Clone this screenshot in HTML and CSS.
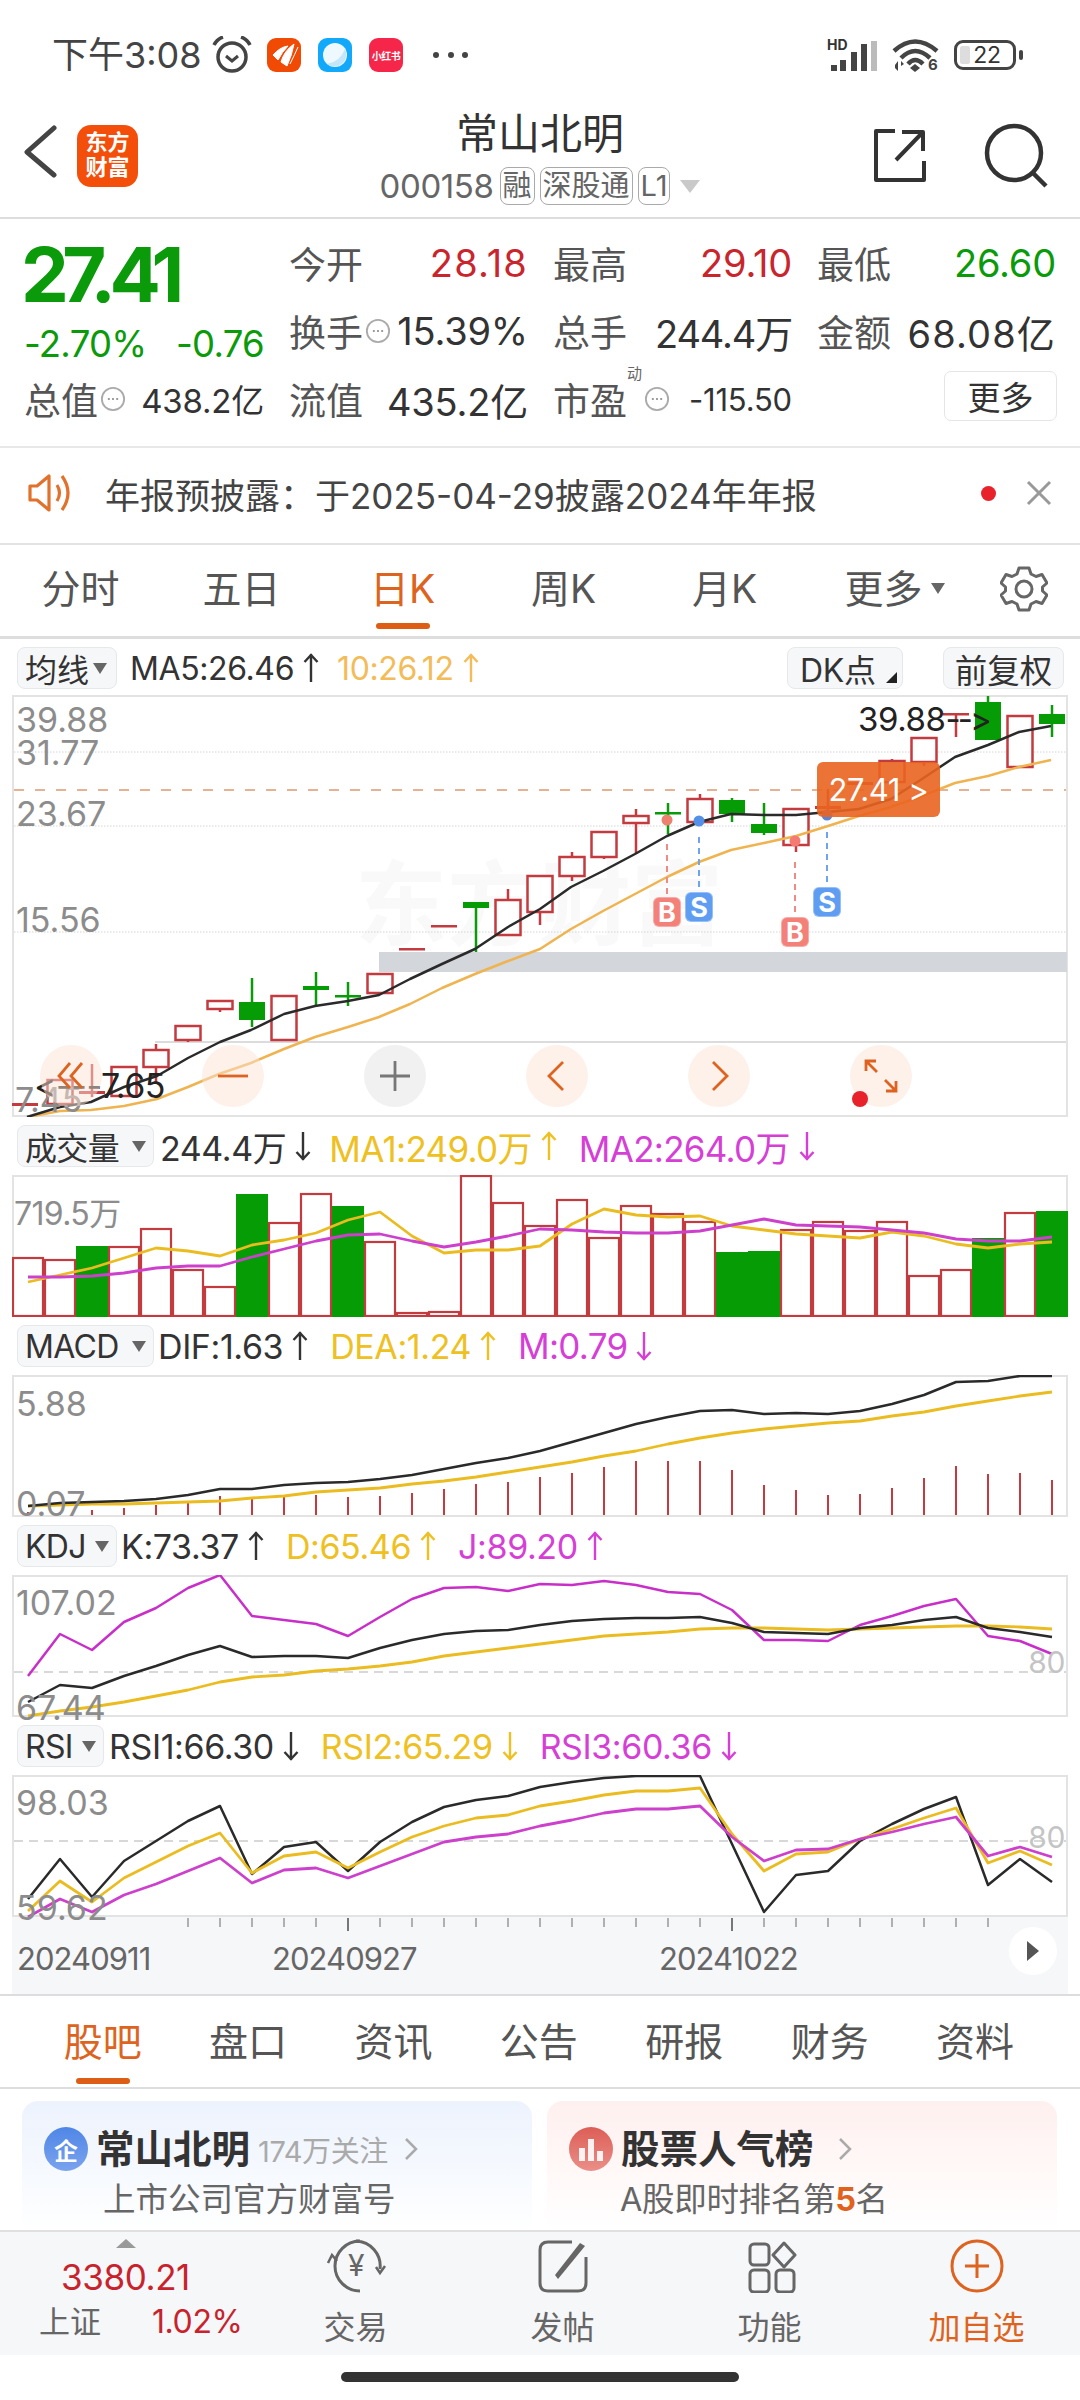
FILE: index.html
```html
<!DOCTYPE html>
<html lang="zh">
<head>
<meta charset="utf-8">
<title>常山北明</title>
<link rel="stylesheet" href="styles.css">
</head>
<body>
<svg class="defs" aria-hidden="true">
  <symbol id="up" viewBox="0 0 16 30"><path d="M8 1V29M1.500 9L8 2L14.500 9" fill="none" stroke="currentColor" stroke-width="2.400"/></symbol>
  <symbol id="down" viewBox="0 0 16 30"><path d="M8 1V29M1.500 21L8 28L14.500 21" fill="none" stroke="currentColor" stroke-width="2.400"/></symbol>
  <symbol id="hint" viewBox="0 0 28 28"><circle cx="14" cy="14" r="12" fill="none" stroke="#aaa" stroke-width="2"/><path d="M8.500 14h2M13 14h2M17.500 14h2" stroke="#999" stroke-width="2"/></symbol>
</svg>
<div class="page">

<div class="status">
  <span class="clock">下午3:08</span>
  <svg class="alarm" width="40" height="38" viewBox="0 0 40 38"><circle cx="20" cy="21" r="14" fill="none" stroke="#444" stroke-width="3.500"/><path d="M14 20l6 5 6-5" fill="none" stroke="#444" stroke-width="3"/><path d="M2 9Q5 3 11 1M38 9Q35 3 29 1" fill="none" stroke="#444" stroke-width="3.500"/></svg>
  <svg class="app app1" width="34" height="34" viewBox="0 0 34 34"><rect width="34" height="34" rx="9" fill="#f04a04"/><path d="M6 17Q13 9 21 8Q15 14 11 22ZM14 24Q17 13 27 6Q25 17 20 28ZM23 26Q28 16 31 9" fill="#fff" stroke="#fff" stroke-width="1"/></svg>
  <svg class="app app2" width="34" height="34" viewBox="0 0 34 34"><rect width="34" height="34" rx="9" fill="#12a9fb"/><circle cx="17" cy="17" r="12" fill="#eef8ff"/><path d="M27 11A12 12 0 0 1 9 26Q22 24 27 11Z" fill="#c4e6fb"/></svg>
  <span class="app3">小红书</span>
  <svg class="more" width="36" height="8" viewBox="0 0 36 8"><circle cx="4" cy="4" r="3" fill="#444"/><circle cx="19" cy="4" r="3" fill="#444"/><circle cx="33" cy="4" r="3" fill="#444"/></svg>
  <div class="status-right">
    <div class="signal">
      <span class="hd">HD</span>
      <svg width="48" height="32" viewBox="0 0 48 32"><path d="M1 26h6v6H1zM10 21h6v11h-6zM21 13h6v19h-6zM31 5h6v27h-6z" fill="#444"/><path d="M41 2h6v30h-6z" fill="#bbb"/></svg>
    </div>
    <svg class="wifi" width="48" height="36" viewBox="0 0 48 36"><path d="M2 14Q23-5 45 14M9 21Q23 7 38 21M16 27Q23 19 31 27" fill="none" stroke="#444" stroke-width="4.500"/><path d="M18 31l5-4 5 4-5 4zM3 28l3-4v10l-3-3zM9 24l3 3-3 2v5z" fill="#444"/><text x="36" y="33" class="wifi6">6</text></svg>
    <div class="battery"><span class="batfill"></span><span class="batnum">22</span></div>
    <span class="batnub"></span>
  </div>
</div>

<header class="head">
  <div class="head-l">
    <svg width="34" height="54" viewBox="0 0 34 54"><path d="M30 3L3 27L30 50" fill="none" stroke="#444" stroke-width="5" stroke-linecap="round" stroke-linejoin="round"/></svg>
    <div class="logo">东方<br>财富</div>
  </div>
  <div class="head-c">
    <div class="title">常山北明</div>
    <div class="code"><span>000158</span><b class="tag">融</b><b class="tag">深股通</b><b class="tag">L1</b><i class="tri"></i></div>
  </div>
  <div class="head-r">
    <svg width="56" height="56" viewBox="0 0 56 56"><path d="M24 4H5V53H53V34M25 33L52 5M31 5H52V24" fill="none" stroke="#333" stroke-width="4" stroke-linejoin="round"/></svg>
    <svg width="60" height="64" viewBox="0 0 60 64"><circle cx="30" cy="30" r="27" fill="none" stroke="#333" stroke-width="4.500"/><path d="M49 50L62 63" stroke="#333" stroke-width="4.500"/></svg>
  </div>
</header>

<section class="quote">
  <div class="left">
    <div class="price">27.41</div>
    <div class="chg"><span>-2.70%</span><span>-0.76</span></div>
  </div>
  <div class="q"><span class="k">今开</span><span class="r wider">28.18</span></div>
  <div class="q"><span class="k">最高</span><span class="r">29.10</span></div>
  <div class="q"><span class="k">最低</span><span class="g">26.60</span></div>
  <div class="q"><span class="k">换手<svg class="hint"><use href="#hint"/></svg></span><span class="v">15.39%</span></div>
  <div class="q"><span class="k">总手</span><span class="v tight">244.4万</span></div>
  <div class="q"><span class="k">金额</span><span class="v wider">68.08亿</span></div>
  <div class="q"><span class="k">总值<svg class="hint"><use href="#hint"/></svg></span><span class="v sm">438.2亿</span></div>
  <div class="q"><span class="k">流值</span><span class="v">435.2亿</span></div>
  <div class="q"><span class="k">市盈<sup class="dyn">动</sup><svg class="hint"><use href="#hint"/></svg></span><span class="v xs">-115.50</span></div>
  <button class="morebtn">更多</button>
</section>

<section class="notice">
  <svg width="46" height="40" viewBox="0 0 46 40"><path d="M2 13H9L21 3V37L9 27H2ZM29 12Q34 20 29 28M34 3Q46 20 34 37" fill="none" stroke="#e2712c" stroke-width="3.200" stroke-linejoin="round"/></svg>
  <span class="ntext">年报预披露：于2025-04-29披露2024年年报</span>
  <i class="rdot"></i>
  <svg class="nx" width="26" height="26" viewBox="0 0 26 26"><path d="M2 2L24 24M24 2L2 24" stroke="#999" stroke-width="3"/></svg>
</section>

<nav class="ptabs">
  <span>分时</span><span>五日</span><span class="on">日K</span><span>周K</span><span>月K</span><span class="pm">更多<i class="tri-s"></i></span>
  <svg class="gear" width="48" height="48" viewBox="0 0 48 48"><path d="M19 3H29L31 9L36 11.500L42 9.500L47 18L42.500 22V26L47 30L42 38.500L36 36.500L31 39L29 45H19L17 39L12 36.500L6 38.500L1 30L5.500 26V22L1 18L6 9.500L12 11.500L17 9Z" fill="none" stroke="#666" stroke-width="3" stroke-linejoin="round"/><circle cx="24" cy="24" r="8" fill="none" stroke="#666" stroke-width="3"/></svg>
</nav>

<section class="panel">
  <div class="bar bar-k">
    <div class="sel sel-k">均线<i class="tri-s"></i></div>
    <span class="m bk pad">MA5:26.46<svg class="ar"><use href="#up"/></svg></span>
    <span class="m ma10">10:26.12<svg class="ar"><use href="#up"/></svg></span>
    <div class="bar-r">
      <div class="sel sel-dk">DK点<i class="corner"></i></div>
      <div class="sel sel-fq">前复权</div>
    </div>
  </div>
  <div class="chart ch-k">
    <div class="wm">东方财富</div>
    <svg class="plot" width="1056" height="422" viewBox="12 696 1056 422">
      <path d="M14 753H1066M14 827H1066M14 933H1066" stroke="#d4d4d4" stroke-width="1" stroke-dasharray="1.500 1.500"/>
      <path d="M155 1043H1066" stroke="#dcdcdc" stroke-width="2"/>
      <rect x="379" y="953" width="688" height="20" fill="#d3d6da"/>
      <path d="M14 791H1066" stroke="#dd9a70" stroke-width="1.500" stroke-dasharray="10 11"/>
      <path d="M92 1065V1098M156 1045V1051M156 1068V1083M188 1041V1043M220 1010V1013M508 890V901M540 913V926M572 853V858M572 877V882M604 858V860M636 810V817M636 824V855M700 795V800M796 846V853M828 790V813M892 760V762M924 763V767M956 715V738" stroke="#c33a3f" stroke-width="2.500"/>
      <path d="M252 979V1028M316 973V1007M348 983V1007M476 903V953M668 804V835M732 799V823M764 804V836M988 697V703M1052 706V738" stroke="#0a9a0a" stroke-width="2.500"/>
      <g class="cu">
        <rect x="47.500" y="1081" width="25" height="24"/><rect x="111.500" y="1068" width="25" height="29"/><rect x="143.500" y="1051" width="25" height="17"/><rect x="175.500" y="1027" width="25" height="14"/><rect x="207.500" y="1002" width="25" height="8"/><rect x="271.500" y="997" width="25" height="44"/><rect x="367.500" y="975" width="25" height="19"/><rect x="495.500" y="901" width="25" height="35"/><rect x="527.500" y="877" width="25" height="36"/><rect x="559.500" y="858" width="25" height="19"/><rect x="591.500" y="833" width="25" height="25"/><rect x="623.500" y="817" width="25" height="7"/><rect x="687.500" y="800" width="25" height="23"/><rect x="783.500" y="810" width="25" height="36"/><rect x="879.500" y="762" width="25" height="21"/><rect x="911.500" y="739" width="25" height="24"/><rect x="1007.500" y="717" width="25" height="51"/>
      </g>
      <g fill="#c33a3f">
        <rect x="12" y="1104" width="26" height="3"/><rect x="79" y="1092" width="26" height="3"/><rect x="399" y="949" width="26" height="2.500"/><rect x="431" y="926" width="26" height="2.500"/><rect x="815" y="807" width="26" height="3"/><rect x="847" y="783" width="26" height="3"/><rect x="943" y="714" width="26" height="2.500"/>
      </g>
      <g fill="#059c05">
        <rect x="239" y="1003" width="26" height="18"/><rect x="303" y="987" width="26" height="4"/><rect x="335" y="996" width="26" height="2.500"/><rect x="463" y="903" width="26" height="6"/><rect x="655" y="813" width="26" height="2.500"/><rect x="719" y="801" width="26" height="14"/><rect x="751" y="825" width="26" height="9"/><rect x="975" y="703" width="26" height="38"/><rect x="1039" y="715" width="26" height="10"/>
      </g>
      <polyline class="l-ma10" points="28,1118 60,1112 91,1111 124,1107 157,1100 188,1088 219,1075 251,1064 284,1050 315,1038 348,1028 379,1018 410,1005 442,989 475,975 508,962 540,950 571,930 603,912 635,895 667,878 699,863 731,851 764,844 796,837 828,827 859,817 891,808 922,797 955,784 988,777 1019,768 1051,761"/>
      <polyline class="l-ma5" points="27,1118 60,1108 91,1103 124,1088 157,1077 188,1059 220,1043 251,1031 284,1015 315,1007 348,1002 379,996 410,980 442,965 475,950 508,928 540,910 571,888 603,872 635,855 667,837 699,823 731,815 764,816 796,816 828,813 859,810 891,800 922,780 955,758 988,746 1019,733 1051,727"/>
      <path d="M667 845V898M795 863V917" stroke="#ee8b84" stroke-width="2" stroke-dasharray="6 5"/>
      <path d="M699 838V892M827 833V887" stroke="#6ea4ec" stroke-width="2" stroke-dasharray="6 5"/>
      <circle cx="667" cy="821" r="5.500" fill="#ec8170"/><circle cx="795" cy="842" r="5.500" fill="#f57b72"/>
      <circle cx="699" cy="822" r="5.500" fill="#5590e8"/><circle cx="827" cy="816" r="5.500" fill="#5a82d8"/>
    </svg>
    <span class="ax ax1">39.88</span><span class="ax ax2">31.77</span><span class="ax ax3">23.67</span><span class="ax ax4">15.56</span><span class="ax ax5">7.45</span>
    <span class="hi">39.88<span class="hi-a">--&gt;</span></span>
    <span class="lo">&lt;---7.65</span>
    <span class="last">27.41 &gt;</span>
    <span class="mk mk-b b1">B</span><span class="mk mk-s s1">S</span><span class="mk mk-b b2">B</span><span class="mk mk-s s2">S</span>
    <div class="navs">
      <span class="nb"><svg width="30" height="30" viewBox="0 0 30 30"><path d="M14 2L3 15L14 27M26 2L15 15L26 27" fill="none" stroke="#dd6420" stroke-width="2.800"/></svg></span>
      <span class="nb"><svg width="30" height="30" viewBox="0 0 30 30"><path d="M0 15H30" fill="none" stroke="#dd6420" stroke-width="2.800"/></svg></span>
      <span class="nb nb-g"><svg width="32" height="32" viewBox="0 0 32 32"><path d="M1 16H31M16 1V31" fill="none" stroke="#777" stroke-width="2.800"/></svg></span>
      <span class="nb"><svg width="30" height="30" viewBox="0 0 30 30"><path d="M21 1L7 15L21 29" fill="none" stroke="#dd6420" stroke-width="2.800"/></svg></span>
      <span class="nb"><svg width="30" height="30" viewBox="0 0 30 30"><path d="M9 1L23 15L9 29" fill="none" stroke="#dd6420" stroke-width="2.800"/></svg></span>
      <span class="nb"><svg width="34" height="34" viewBox="0 0 34 34"><path d="M2 12V2H12M2 2L13 13M32 22V32H22M32 32L21 21" fill="none" stroke="#dd6420" stroke-width="2.800"/></svg></span>
    </div>
    <i class="navdot"></i>
  </div>

  <div class="bar">
    <div class="sel sel-w">成交量<i class="tri-s"></i></div>
    <span class="m bk pad2">244.4万<svg class="ar"><use href="#down"/></svg></span>
    <span class="m ye wide">MA1:249.0万<svg class="ar"><use href="#up"/></svg></span>
    <span class="m pu wide">MA2:264.0万<svg class="ar"><use href="#down"/></svg></span>
  </div>
  <div class="chart ch-s">
    <svg class="plot" width="1056" height="142" viewBox="12 1176 1056 142">
      <g class="vu">
        <rect x="13" y="1259" width="30" height="58"/><rect x="45" y="1261" width="30" height="56"/><rect x="109" y="1248" width="30" height="69"/><rect x="141" y="1230" width="30" height="87"/><rect x="173" y="1271" width="30" height="46"/><rect x="205" y="1288" width="30" height="29"/><rect x="269" y="1224" width="30" height="93"/><rect x="301" y="1195" width="30" height="122"/><rect x="365" y="1243" width="30" height="74"/><rect x="397" y="1314" width="30" height="3"/><rect x="429" y="1313" width="30" height="4"/><rect x="461" y="1177" width="30" height="140"/><rect x="493" y="1204" width="30" height="113"/><rect x="525" y="1227" width="30" height="90"/><rect x="557" y="1201" width="30" height="116"/><rect x="589" y="1239" width="30" height="78"/><rect x="621" y="1207" width="30" height="110"/><rect x="653" y="1215" width="30" height="102"/><rect x="685" y="1223" width="30" height="94"/><rect x="781" y="1231" width="30" height="86"/><rect x="813" y="1223" width="30" height="94"/><rect x="845" y="1232" width="30" height="85"/><rect x="877" y="1223" width="30" height="94"/><rect x="909" y="1277" width="30" height="40"/><rect x="941" y="1271" width="30" height="46"/><rect x="1005" y="1214" width="30" height="103"/>
      </g>
      <g fill="#059c05">
        <rect x="76" y="1247" width="32" height="71"/><rect x="236" y="1195" width="32" height="123"/><rect x="332" y="1207" width="32" height="111"/><rect x="716" y="1253" width="32" height="65"/><rect x="748" y="1252" width="32" height="66"/><rect x="972" y="1239" width="32" height="79"/><rect x="1036" y="1212" width="32" height="106"/>
      </g>
      <polyline class="l-y" points="28,1283 60,1276 92,1269 124,1259 156,1249 188,1252 220,1257 252,1246 284,1241 316,1234 348,1221 380,1213 412,1237 444,1254 476,1251 508,1251 540,1247 572,1225 604,1210 636,1216 668,1218 700,1217 732,1227 764,1231 796,1235 828,1237 860,1239 892,1233 924,1237 956,1245 988,1249 1020,1245 1052,1243"/>
      <polyline class="l-p" points="28,1278 60,1278 92,1277 124,1274 156,1269 188,1267 220,1267 252,1258 284,1250 316,1242 348,1236 380,1235 412,1242 444,1248 476,1243 508,1237 540,1230 572,1231 604,1233 636,1234 668,1234 700,1232 732,1226 764,1220 796,1226 828,1227 860,1228 892,1231 924,1234 956,1240 988,1242 1020,1242 1052,1238"/>
    </svg>
    <span class="ax ax-vol">719.5万</span>
  </div>

  <div class="bar">
    <div class="sel sel-w">MACD<i class="tri-s"></i></div>
    <span class="m bk pad3">DIF:1.63<svg class="ar"><use href="#up"/></svg></span>
    <span class="m ye">DEA:1.24<svg class="ar"><use href="#up"/></svg></span>
    <span class="m pu wide">M:0.79<svg class="ar"><use href="#down"/></svg></span>
  </div>
  <div class="chart ch-s">
    <svg class="plot" width="1056" height="142" viewBox="12 1376 1056 142">
      <path d="M28 1516V1513M60 1516V1513M92 1516V1511M124 1516V1509M156 1516V1506M188 1516V1502M220 1516V1497M252 1516V1498M284 1516V1497M316 1516V1496M348 1516V1498M380 1516V1497M412 1516V1494M444 1516V1490M476 1516V1485M508 1516V1483M540 1516V1478M572 1516V1474M604 1516V1468M636 1516V1462M668 1516V1462M700 1516V1462M732 1516V1471M764 1516V1486M796 1516V1491M828 1516V1496M860 1516V1495M892 1516V1489M924 1516V1479M956 1516V1467M988 1516V1475M1020 1516V1474M1052 1516V1481" stroke="#c33a3f" stroke-width="2"/>
      <polyline class="l-y" points="28,1507 60,1506 92,1505 124,1505 156,1504 188,1503 220,1502 252,1499 284,1497 316,1493 348,1491 380,1489 412,1485 444,1482 476,1478 508,1473 540,1468 572,1463 604,1457 636,1452 668,1445 700,1439 732,1434 764,1430 796,1427 828,1424 860,1422 892,1417 924,1413 956,1407 988,1402 1020,1397 1052,1393"/>
      <polyline class="l-k" points="28,1507 60,1504 92,1503 124,1502 156,1500 188,1496 220,1490 252,1490 284,1486 316,1484 348,1483 380,1480 412,1476 444,1470 476,1464 508,1459 540,1452 572,1443 604,1434 636,1425 668,1418 700,1412 732,1411 764,1415 796,1414 828,1415 860,1412 892,1405 924,1396 956,1383 988,1382 1020,1377 1052,1377"/>
    </svg>
    <span class="ax ax-m">5.88</span><span class="ax ax-b">0.07</span>
  </div>

  <div class="bar">
    <div class="sel sel-kdj">KDJ<i class="tri-s"></i></div>
    <span class="m bk pad4">K:73.37<svg class="ar"><use href="#up"/></svg></span>
    <span class="m ye">D:65.46<svg class="ar"><use href="#up"/></svg></span>
    <span class="m pu">J:89.20<svg class="ar"><use href="#up"/></svg></span>
  </div>
  <div class="chart ch-s">
    <svg class="plot" width="1056" height="142" viewBox="12 1576 1056 142">
      <path d="M14 1673H1066" stroke="#d8d8d8" stroke-width="2" stroke-dasharray="9 6"/>
      <polyline class="l-p2" points="28,1677 60,1635 92,1651 124,1623 156,1609 188,1589 220,1576 252,1617 284,1621 316,1625 348,1637 380,1618 412,1600 444,1589 476,1588 508,1592 540,1585 572,1586 604,1582 636,1586 668,1593 700,1595 732,1611 764,1641 796,1641 828,1642 860,1626 892,1617 924,1607 956,1600 988,1637 1020,1642 1052,1655"/>
      <polyline class="l-y" points="28,1717 60,1712 92,1708 124,1703 156,1697 188,1691 220,1683 252,1678 284,1676 316,1672 348,1670 380,1667 412,1663 444,1657 476,1653 508,1649 540,1645 572,1641 604,1637 636,1635 668,1633 700,1630 732,1629 764,1629 796,1630 828,1631 860,1630 892,1629 924,1628 956,1627 988,1627 1020,1628 1052,1630"/>
      <polyline class="l-k" points="28,1703 60,1686 92,1689 124,1677 156,1667 188,1656 220,1647 252,1658 284,1657 316,1657 348,1659 380,1649 412,1641 444,1635 476,1632 508,1631 540,1626 572,1622 604,1620 636,1619 668,1619 700,1618 732,1624 764,1633 796,1634 828,1635 860,1629 892,1626 924,1621 956,1618 988,1629 1020,1633 1052,1638"/>
    </svg>
    <span class="ax ax-a">107.02</span><span class="ax ax-c">67.44</span><span class="ax80 k80">80</span>
  </div>

  <div class="bar">
    <div class="sel sel-rsi">RSI<i class="tri-s"></i></div>
    <span class="m bk pad5">RSI1:66.30<svg class="ar"><use href="#down"/></svg></span>
    <span class="m ye">RSI2:65.29<svg class="ar"><use href="#down"/></svg></span>
    <span class="m pu">RSI3:60.36<svg class="ar"><use href="#down"/></svg></span>
  </div>
  <div class="chart ch-s">
    <svg class="plot" width="1056" height="142" viewBox="12 1776 1056 142">
      <path d="M14 1842H1066" stroke="#d8d8d8" stroke-width="2" stroke-dasharray="9 6"/>
      <polyline class="l-k" points="28,1900 60,1860 92,1898 124,1862 156,1842 188,1822 220,1807 252,1875 284,1848 316,1843 348,1872 380,1843 412,1823 444,1808 476,1801 508,1797 540,1788 572,1783 604,1779 636,1777 668,1777 700,1777 732,1845 764,1913 796,1876 828,1872 860,1842 892,1825 924,1810 956,1798 988,1886 1020,1860 1052,1883"/>
      <polyline class="l-y" points="28,1912 60,1882 92,1903 124,1879 156,1863 188,1847 220,1834 252,1874 284,1857 316,1853 348,1869 380,1853 412,1838 444,1827 476,1819 508,1816 540,1807 572,1802 604,1796 636,1792 668,1792 700,1789 732,1835 764,1872 796,1855 828,1853 860,1840 892,1830 924,1819 956,1809 988,1864 1020,1852 1052,1866"/>
      <polyline class="l-p" points="28,1918 60,1900 92,1913 124,1896 156,1885 188,1872 220,1859 252,1884 284,1871 316,1869 348,1879 380,1867 412,1855 444,1843 476,1838 508,1835 540,1827 572,1821 604,1814 636,1810 668,1810 700,1807 732,1838 764,1862 796,1851 828,1850 860,1840 892,1833 924,1825 956,1818 988,1857 1020,1848 1052,1858"/>
    </svg>
    <span class="ax ax-a">98.03</span><span class="ax ax-d">59.62</span><span class="ax80 r80">80</span>
  </div>

  <div class="dates">
    <svg class="ticks" width="1056" height="16" viewBox="12 1918 1056 16"><path d="M188 1919V1928M220 1919V1928M252 1919V1928M284 1919V1928M316 1919V1928M380 1919V1928M412 1919V1928M444 1919V1928M476 1919V1928M508 1919V1928M540 1919V1928M572 1919V1928M604 1919V1928M636 1919V1928M668 1919V1928M700 1919V1928M764 1919V1928M796 1919V1928M828 1919V1928M860 1919V1928M892 1919V1928M924 1919V1928M956 1919V1928M988 1919V1928" stroke="#999" stroke-width="1.500"/><path d="M348 1919V1932M732 1919V1932" stroke="#777" stroke-width="2"/></svg>
    <span class="dt d1">20240911</span><span class="dt d2">20240927</span><span class="dt d3">20241022</span>
    <span class="play"><i></i></span>
  </div>
</section>

<nav class="ftabs">
  <span class="on">股吧</span><span>盘口</span><span>资讯</span><span>公告</span><span>研报</span><span>财务</span><span>资料</span>
</nav>

<section class="cards">
  <div class="card card-b">
    <div class="ct"><span class="ci ci-b">企</span><b class="cn">常山北明</b><span class="cf">174万关注</span><svg class="chev" width="14" height="24" viewBox="0 0 14 24"><path d="M2 2L12 12L2 22" fill="none" stroke="#aaa" stroke-width="2.500"/></svg></div>
    <div class="cs">上市公司官方财富号</div>
  </div>
  <div class="card card-r">
    <div class="ct"><span class="ci ci-r"><svg width="26" height="26" viewBox="0 0 26 26"><path d="M1 25V12h6v13zM10 25V3h6v22zM19 25V15h6v10z" fill="#fff" opacity=".9"/></svg></span><b class="cn">股票人气榜</b><svg class="chev chev2" width="14" height="24" viewBox="0 0 14 24"><path d="M2 2L12 12L2 22" fill="none" stroke="#aaa" stroke-width="2.500"/></svg></div>
    <div class="cs cs2">A股即时排名第<b>5</b>名</div>
  </div>
</section>

<footer class="foot">
  <div class="idx">
    <i class="idx-tri"></i>
    <div class="idx-v">3380.21</div>
    <div class="idx-b"><span class="idx-n">上证</span><span class="idx-p">1.02%</span></div>
  </div>
  <div class="fi">
    <svg width="64" height="54" viewBox="0 0 64 54"><path d="M36 2A25 25 0 1 0 36 52M32 2A25 25 0 0 1 56 30" fill="none" stroke="#666" stroke-width="3"/><path d="M4 24L8 16L13 22M52 28L56 34L61 27" fill="none" stroke="#666" stroke-width="2.500"/><text x="32" y="37" text-anchor="middle" class="yen">¥</text></svg>
    <span>交易</span>
  </div>
  <div class="fi">
    <svg width="54" height="54" viewBox="0 0 54 54"><path d="M36 3H12Q4 3 4 11V44Q4 52 12 52H42Q50 52 50 44V18" fill="none" stroke="#666" stroke-width="3"/><path d="M19 36L44 4L49 7L22 40Z" fill="#666"/></svg>
    <span>发帖</span>
  </div>
  <div class="fi">
    <svg width="54" height="54" viewBox="0 0 54 54"><rect x="7" y="5" width="19" height="21" rx="4" fill="none" stroke="#666" stroke-width="3"/><path d="M41 4L52 16L41 28L30 16Z" fill="none" stroke="#666" stroke-width="3" stroke-linejoin="round"/><rect x="7" y="31" width="19" height="22" rx="4" fill="none" stroke="#666" stroke-width="3"/><rect x="33" y="31" width="18" height="22" rx="4" fill="none" stroke="#666" stroke-width="3"/></svg>
    <span>功能</span>
  </div>
  <div class="fi fi-on">
    <svg width="54" height="54" viewBox="0 0 54 54"><circle cx="27" cy="27" r="25" fill="none" stroke="#dd6420" stroke-width="3"/><path d="M27 15V39M15 27H39" stroke="#dd6420" stroke-width="3"/></svg>
    <span>加自选</span>
  </div>
</footer>

<div class="home"><i></i></div>
</div>
</body>
</html>
```
FILE: styles.css
```css
* { box-sizing: border-box; margin: 0; padding: 0; }
html, body { background: #fff; }
body { font-family: Inter, "Noto Sans CJK SC", sans-serif; color: #333; }
i { display: block; font-style: normal; }
.defs { display: none; }
.page { width: 1080px; height: 2400px; overflow: hidden; display: flex; flex-direction: column; letter-spacing: -.025em; }

/* status */
.status { height: 88px; flex: none; display: flex; align-items: center; padding: 22px 0 0 52px; position: relative; }
.clock { font-size: 36px; color: #444; line-height: 40px; width: 152px; white-space: nowrap; letter-spacing: 0; }
.alarm { margin-left: 8px; }
.app { margin-left: 13px; flex: none; }
.app1 { margin-left: 15px; }
.app2 { margin-left: 17px; }
.app3 { width: 34px; height: 34px; background: #f6264a; border-radius: 9px; margin-left: 17px; color: #fff; font-size: 10px; font-weight: 700; letter-spacing: -.5px; display: flex; align-items: center; justify-content: center; white-space: nowrap; overflow: hidden; }
.more { margin-left: 29px; }
.status-right { margin-left: auto; display: flex; align-items: center; padding-right: 57px; }
.signal { position: relative; width: 48px; height: 32px; margin-right: 14px; }
.hd { position: absolute; left: -3px; top: -1px; font-size: 14px; font-weight: 700; line-height: 14px; color: #333; letter-spacing: 0; }
.wifi { margin-right: 14px; overflow: visible; }
.wifi6 { font: 700 15px Inter, sans-serif; fill: #444; }
.battery { width: 62px; height: 30px; border: 3px solid #444; border-radius: 9px; position: relative; display: flex; align-items: center; justify-content: center; }
.batfill { position: absolute; left: 3px; top: 3px; width: 10px; height: 18px; background: #ddd; border-radius: 2px; }
.batnum { font-size: 23px; line-height: 24px; color: #333; margin-left: 4px; }
.batnub { width: 4px; height: 10px; background: #444; border-radius: 2px; margin-left: 3px; }

/* header */
.head { height: 131px; flex: none; display: flex; border-bottom: 2px solid #ddd; }
.head-l { width: 300px; display: flex; align-items: flex-start; padding: 37px 0 0 24px; }
.logo { width: 61px; height: 62px; background: #f34e0a; border-radius: 14px; margin: 0 0 0 19px; color: #fff; font-weight: 700; font-size: 22px; line-height: 25px; text-align: center; padding-top: 5px; letter-spacing: 0; }
.head-c { width: 480px; display: flex; flex-direction: column; align-items: center; }
.title { font-size: 42px; line-height: 48px; height: 48px; margin-top: 22px; color: #333; letter-spacing: 0; }
.code { display: flex; align-items: center; height: 40px; margin-top: 8px; color: #666; font-size: 33px; }
.tag { font-weight: 400; font-size: 29px; line-height: 36px; height: 38px; border: 1.500px solid #aaa; border-radius: 8px; margin-left: 5px; padding: 0 2px; color: #666; letter-spacing: 0; }
.code .tag:first-of-type { margin-left: 6px; }
.tri { width: 0; height: 0; border-left: 10px solid transparent; border-right: 10px solid transparent; border-top: 13px solid #c9c9c9; margin-left: 10px; }
.head-r { width: 300px; display: flex; padding: 39px 0 0 91px; gap: 57px; align-items: flex-start; }
.head-r svg:last-child { margin-top: -4px; overflow: visible; flex: none; }
.head-r svg { flex: none; }

/* quote */
.quote { height: 229px; flex: none; border-bottom: 2px solid #e8e8e8; display: grid; grid-template-columns: 240px 239px 239px 239px; grid-template-rows: 68px 68px 68px; column-gap: 25px; padding: 10px 0 0 24px; align-content: start; }
.left { grid-row: 1 / span 2; padding-top: 6px; }
.price { font-size: 76px; line-height: 78px; font-weight: 700; color: #0a9a0a; letter-spacing: -6.500px; margin-left: -3px; }
.chg { display: flex; justify-content: space-between; color: #0a9a0a; font-size: 36.500px; line-height: 36px; margin-top: 13px; letter-spacing: -.02em; }
.q { display: flex; justify-content: space-between; align-items: center; font-size: 38px; white-space: nowrap; letter-spacing: -.005em; }
.k { color: #555; font-size: 37px; display: flex; align-items: center; letter-spacing: 0; }
.r { color: #c9252d; }
.g { color: #0a9a0a; }
.v { color: #333; }
.wider { letter-spacing: .03em; }
.tight { letter-spacing: -.03em; }
.q .sm { font-size: 33px; }
.q .xs { font-size: 31px; }
.hint { width: 26px; height: 26px; margin-left: 2px; }
.dyn { font-size: 15px; color: #666; line-height: 16px; align-self: flex-start; margin-top: -6px; }
.morebtn { justify-self: end; align-self: center; width: 113px; height: 50px; background: #fff; border: 1.500px solid #e5e5e5; border-radius: 7px; font: inherit; font-size: 33px; color: #333; margin-right: -1px; margin-top: -6px; }

/* notice */
.notice { height: 97px; flex: none; border-bottom: 2px solid #e3e3e3; display: flex; align-items: center; padding: 0 28px 5px 28px; }
.ntext { font-size: 35px; color: #444; margin-left: 31px; letter-spacing: 0; white-space: nowrap; flex: 1; }
.rdot { width: 15px; height: 15px; border-radius: 50%; background: #e8222a; }
.nx { margin-left: 30px; }

/* period tabs */
.ptabs { height: 94px; flex: none; display: flex; align-items: center; border-bottom: 3px solid #ddd; position: relative; padding-bottom: 4px; }
.ptabs span { width: 161px; text-align: center; font-size: 39px; color: #555; letter-spacing: 0; line-height: 46px; }
.ptabs .on { color: #dd6420; position: relative; }
.ptabs .on::after { content: ""; position: absolute; left: 54px; width: 54px; height: 6px; top: 57px; background: #dd5d14; border-radius: 3px; }
.pm { display: flex; align-items: center; justify-content: center; padding-left: 18px; }
.tri-s { width: 0; height: 0; flex: none; border-left: 7px solid transparent; border-right: 7px solid transparent; border-top: 11px solid #666; margin-left: 8px; }
.gear { margin-left: 34px; }

/* panel */
.panel { padding: 0 12px; flex: none; }
.bar { height: 58px; display: flex; align-items: center; padding: 0 4px 0 5px; white-space: nowrap; font-size: 34px; }
.bar-k { font-size: 32px; }
.sel { height: 42px; border: 1.500px solid #e6e8eb; background: #f6f7f9; border-radius: 8px; display: flex; align-items: center; padding: 0 7px; font-size: 32px; color: #333; flex: none; letter-spacing: 0; }
.sel-k { width: 100px; }
.sel-w { width: 137px; letter-spacing: -.02em; justify-content: space-between; }
.sel-kdj { width: 100px; justify-content: space-between; letter-spacing: -.02em; }
.sel-rsi { width: 87px; justify-content: space-between; letter-spacing: -.02em; }
.sel .tri-s { margin-left: 4px; }
.sel-dk { width: 116px; position: relative; padding-left: 12px; letter-spacing: -.01em; }
.sel-fq { width: 121px; margin-left: 40px; justify-content: center; font-size: 32.500px; }
.corner { position: absolute; right: 5px; bottom: 5px; width: 0; height: 0; border-left: 11px solid transparent; border-bottom: 11px solid #222; }
.bar-r { margin-left: auto; display: flex; }
.m { display: inline-flex; align-items: center; gap: 9px; margin-right: 22px; }
.ar { width: 16px; height: 30px; flex: none; }
.bk { color: #333; }
.pad { margin-left: 13px; margin-right: 18px; }
.pad2 { margin-left: 6px; margin-right: 18px; }
.pad3 { margin-left: 4px; }
.pad4 { margin-left: 4px; }
.pad5 { margin-left: 5px; }
.wide { font-size: 35px; letter-spacing: -.02em; }
.ma10 { color: #f3bc58; }
.ye { color: #eec022; }
.pu { color: #d63fd6; }

/* charts */
.chart { position: relative; width: 1056px; outline: 2px solid #e3e3e3; outline-offset: -2px; }
.ch-k { height: 422px; margin-top: -2px; }
.ch-s { height: 142px; }
.plot { display: block; position: relative; overflow: hidden; }
.cu rect { fill: #fff; stroke: #c33a3f; stroke-width: 2.500; }
.vu rect { fill: #fff; stroke: #c33a3f; stroke-width: 2.200; }
polyline { fill: none; stroke-linejoin: round; }
.l-ma5 { stroke: #2a2a2a; stroke-width: 2.500; }
.l-ma10 { stroke: #efb350; stroke-width: 2.500; }
.l-k { stroke: #2a2a2a; stroke-width: 2.500; }
.l-y { stroke: #eabc20; stroke-width: 2.800; }
.l-p { stroke: #cc40cc; stroke-width: 2.800; }
.l-p2 { stroke: #c82fc8; stroke-width: 2.500; }
.wm { position: absolute; left: 343px; top: 164px; font-size: 92px; line-height: 92px; font-weight: 700; color: #f9f9f9; white-space: nowrap; letter-spacing: 0; }
.ch-k .plot { z-index: 1; background: transparent; }
.ax, .hi, .lo, .last, .mk, .navs, .navdot, .ax80 { position: absolute; z-index: 2; white-space: nowrap; }
.ax { left: 4px; font-size: 34px; line-height: 36px; color: #8c8c8c; letter-spacing: 0; }
.ax1 { top: 7px; }
.ax2 { top: 40px; }
.ax3 { top: 101px; }
.ax4 { top: 207px; }
.ax5 { top: 387px; left: 3px; }
.hi { left: 846px; top: 6px; font-size: 33px; line-height: 36px; color: #222; }
.hi-a { letter-spacing: -3px; }
.lo { left: 22px; top: 373px; font-size: 34px; line-height: 36px; color: #222; }
.last { left: 805px; top: 67px; width: 123px; height: 55px; background: rgba(234,100,32,.9); border-radius: 6px; color: #fff; font-size: 31px; line-height: 55px; text-align: center; }
.mk { width: 28px; height: 30px; border-radius: 6px; color: #fff; font-weight: 700; font-size: 27px; line-height: 30px; text-align: center; letter-spacing: 0; border: 1px solid rgba(255,255,255,.35); }
.mk-b { background: #f4807a; }
.mk-s { background: #5e9df2; }
.b1 { left: 641px; top: 202px; }
.s1 { left: 673px; top: 197px; }
.b2 { left: 769px; top: 222px; }
.s2 { left: 801px; top: 192px; }
.navs { left: 28px; top: 350px; display: flex; gap: 100px; }
.nb { width: 62px; height: 62px; border-radius: 50%; background: rgba(252,228,214,.5); display: flex; align-items: center; justify-content: center; }
.nb-g { background: rgba(232,232,232,.6); }
.navdot { left: 840px; top: 396px; width: 16px; height: 16px; border-radius: 50%; background: #e8222a; }
.ch-s .ax-vol { top: 21px; left: 2px; font-size: 32px; letter-spacing: -.02em; }
.ax-a { top: 10px; }
.ax-m { top: 11px; }
.ax-b { top: 111px; }
.ax-c { top: 115px; }
.ax-d { top: 115px; }
.ax80 { right: 3px; font-size: 30px; line-height: 30px; color: #c4c4c4; }
.k80 { top: 72px; }
.r80 { top: 47px; }

.dates { height: 77px; background: #f6f7f9; position: relative; }
.ticks { display: block; position: absolute; left: 0; top: 0; }
.dt { position: absolute; top: 24px; font-size: 31px; line-height: 36px; color: #666; letter-spacing: -.03em; }
.d1 { left: 5px; }
.d2 { left: 260px; }
.d3 { left: 647px; }
.play { position: absolute; left: 997px; top: 10px; width: 48px; height: 48px; border-radius: 50%; background: #fff; display: flex; align-items: center; justify-content: center; }
.play i { width: 0; height: 0; border-top: 10px solid transparent; border-bottom: 10px solid transparent; border-left: 12px solid #555; }

/* lower tabs */
.ftabs { height: 95px; flex: none; border-top: 2px solid #ddd; border-bottom: 2px solid #ddd; display: flex; padding: 0 30px; align-items: center; }
.ftabs span { width: 145.400px; text-align: center; font-size: 39px; color: #555; line-height: 46px; letter-spacing: 0; }
.ftabs .on { color: #dd6420; position: relative; }
.ftabs .on::after { content: ""; position: absolute; left: 46px; width: 54px; height: 6px; top: 59px; background: #dd5d14; border-radius: 3px; }

/* cards */
.cards { height: 141px; flex: none; display: grid; grid-template-columns: 510px 510px; column-gap: 15px; padding: 12px 0 0 22px; }
.card { border-radius: 16px 16px 0 0; height: 129px; padding: 26px 0 0 22px; }
.card-b { background: linear-gradient(180deg, #edf3fd 0%, #f4f8fe 45%, #fff 100%); }
.card-r { background: linear-gradient(180deg, #fef0ef 0%, #fff7f6 45%, #fff 100%); }
.ct { display: flex; align-items: center; height: 44px; }
.ci { width: 44px; height: 44px; border-radius: 50%; color: #fff; font-size: 24px; font-weight: 700; display: flex; align-items: center; justify-content: center; margin-right: 8px; flex: none; letter-spacing: 0; }
.ci-b { background: linear-gradient(180deg, #4f86e6, #7aa3ee); }
.ci-r { background: linear-gradient(180deg, #dc5e56, #ea8f88); }
.cn { font-size: 38.500px; font-weight: 700; color: #333; line-height: 44px; letter-spacing: 0; }
.cf { font-size: 29px; color: #aaa; margin-left: 8px; }
.chev { margin-left: 16px; }
.chev2 { margin-left: 24px; }
.cs { font-size: 32.500px; line-height: 36px; color: #666; margin: 11px 0 0 59px; letter-spacing: 0; }
.cs2 { margin-left: 51px; letter-spacing: -.01em; }
.cs2 b { color: #e0621c; font-weight: 700; }

/* footer */
.foot { height: 125px; flex: none; background: #f6f7f9; border-top: 2px solid #e0e0e0; display: grid; grid-template-columns: 252px repeat(4, 207px); }
.idx { position: relative; padding: 26px 0 0 39px; }
.idx-tri { position: absolute; left: 116px; top: 7px; width: 0; height: 0; border-left: 10px solid transparent; border-right: 10px solid transparent; border-bottom: 9px solid #999; }
.idx-v { font-size: 35px; line-height: 38px; color: #c8232c; margin-left: 22px; }
.idx-b { display: flex; align-items: center; margin-top: 6px; }
.idx-n { font-size: 31px; line-height: 40px; color: #666; letter-spacing: 0; }
.idx-p { font-size: 32px; line-height: 40px; color: #c8232c; margin-left: 51px; }
.fi { display: flex; flex-direction: column; align-items: center; padding-top: 7px; color: #666; }
.fi svg { flex: none; }
.fi span { font-size: 32px; line-height: 40px; margin-top: 15px; letter-spacing: 0; }
.fi-on { color: #dd6420; }
.yen { font: 400 30px Inter, sans-serif; fill: #666; }

.home { flex: 1; display: flex; justify-content: center; padding-top: 17px; }
.home i { width: 398px; height: 10px; border-radius: 5px; background: #333; }
```
